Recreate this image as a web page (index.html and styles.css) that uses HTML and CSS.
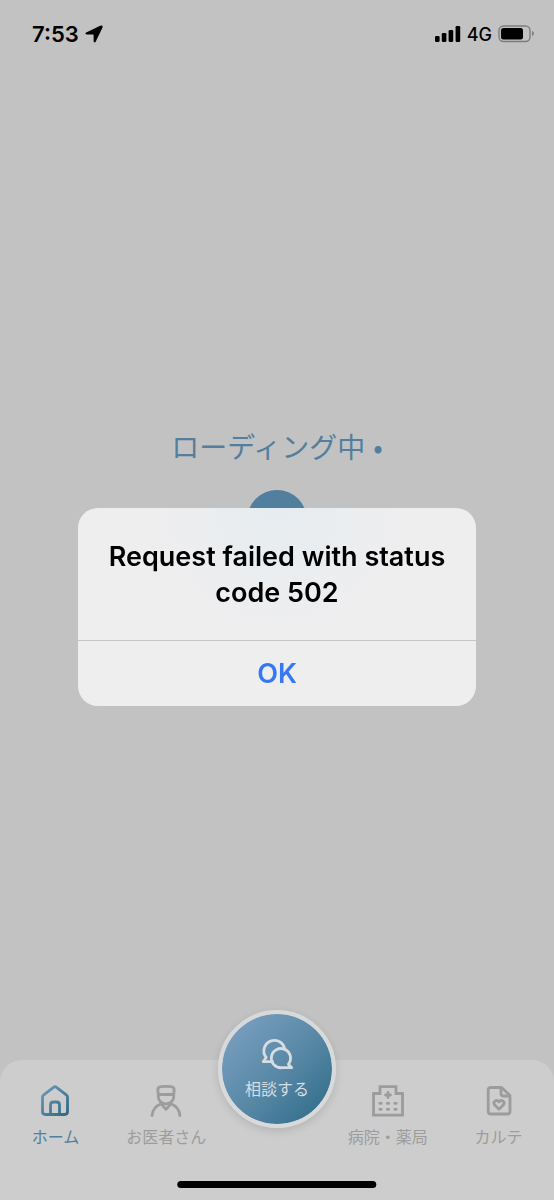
FILE: index.html
```html
<!DOCTYPE html>
<html lang="ja">
<head>
    <meta charset="UTF-8">
    <meta name="viewport" content="width=device-width, initial-scale=1.0">
    <title>ホーム</title>
    <link rel="stylesheet" href="styles.css">
</head>
<body>

<header class="status-bar">
    <div class="status-left">
        <span class="time">7:53</span>
        <svg width="18" height="18" viewBox="0 0 18 18" aria-hidden="true">
            <path d="M1.2 7.6 15.2 .7Q18.4 -.2 17.4 2.8L10.8 16.6Q9.6 18.6 8.6 16.4V10.2Q8.6 9.4 7.8 9.4H1.9Q-.8 9 1.2 7.6Z"/>
        </svg>
    </div>
    <div class="status-right">
        <svg width="26" height="16" viewBox="0 0 26 16" aria-hidden="true">
            <rect x="0" y="10" width="4.6" height="6" rx="1.2"/>
            <rect x="6.8" y="7" width="4.6" height="9" rx="1.2"/>
            <rect x="13.6" y="4" width="4.6" height="12" rx="1.2"/>
            <rect x="20.6" y="0" width="4.6" height="16" rx="1.2"/>
        </svg>
        <span class="network">4G</span>
        <svg width="36" height="18" viewBox="0 0 36 18" aria-hidden="true">
            <rect x="1" y="1" width="31" height="15.5" rx="4.5" fill="none" stroke="#7d7d7d" stroke-width="1.4"/>
            <rect x="3" y="3" width="22" height="11.5" rx="2.5"/>
            <path d="M34 6q2 .8 2 2.6T34 11Z" fill="#7d7d7d"/>
        </svg>
    </div>
</header>

<main class="loading">
    <p class="loading-text">ローディング中<span class="dot">•</span></p>
    <div class="loading-ball"></div>
</main>

<nav class="tab-bar">
    <a class="tab active" href="#home">
        <svg class="tab-icon" viewBox="0 0 36 36" aria-hidden="true">
            <defs>
                <linearGradient id="homeColor" x1="0" y1="0" x2="1" y2="1">
                    <stop offset="0" stop-color="#6c9abb"/>
                    <stop offset="1" stop-color="#2f6884"/>
                </linearGradient>
            </defs>
            <path stroke="url(#homeColor)" d="M5.5 14.2Q5.5 13 6.4 12.2L16.5 4.3Q18 3.2 19.5 4.3L29.6 12.2Q30.5 13 30.5 14.2V28.5Q30.5 31.5 27.5 31.5H8.5Q5.5 31.5 5.5 28.5ZM13.5 31V22Q13.5 19 16.5 19H19.5Q22.5 19 22.5 22V31"/>
        </svg>
        <span>ホーム</span>
    </a>
    <a class="tab" href="#doctors">
        <svg class="tab-icon" viewBox="0 0 36 36" aria-hidden="true">
            <path d="M9.8 7Q10 4 13 3.7Q18 3 23 3.7Q26.2 4 26.2 7L25.7 11.5V14C25.7 18 22 20.8 18 20.8S10.3 18 10.3 14V11.5Z"/>
            <path d="M10.3 11.5H25.7M4 32.5C4.6 26.5 7.5 23 13.2 20.8L18 26.3L22.8 20.8C28.5 23 31.4 26.5 32 32.5"/>
        </svg>
        <span>お医者さん</span>
    </a>
    <a class="consult" href="#consult">
        <svg class="consult-icon" viewBox="0 0 34 34" aria-hidden="true">
            <path d="M24.7 12A10.5 10.5 0 1 0 6.2 20.5L3.2 24.7H12.5"/>
            <path d="M28.4 27.2A9.6 9.6 0 1 0 22 30.7H31.7Z"/>
        </svg>
        <span>相談する</span>
    </a>
    <a class="tab" href="#hospitals">
        <svg class="tab-icon" viewBox="0 0 36 36" aria-hidden="true">
            <path class="square" d="M3.5 32.2V10.5H10V3.7H26V10.5H32.5V32.2Z"/>
            <path d="M18 9.5V14.5M15.5 12H20.5"/>
            <path d="M9.8 20.3H11.2M17.3 20.3H18.7M24.8 20.3H26.2M9.8 26.3H11.2M17.3 26.3H18.7M24.8 26.3H26.2"/>
        </svg>
        <span>病院・薬局</span>
    </a>
    <a class="tab" href="#karte">
        <svg class="tab-icon" viewBox="0 0 36 36" aria-hidden="true">
            <path d="M10 4.5H20.5L29 12.5V28.5Q29 31 26.5 31H10Q7.2 31 7.2 28.5V7Q7.2 4.5 10 4.5Z"/>
            <path d="M20 5V10.5Q20 13 22.5 13H28.5"/>
            <path d="M18 26.3L13.5 21.8C11.5 19 15.5 15.8 18 18.8C20.5 15.8 24.5 19 22.5 21.8Z"/>
        </svg>
        <span>カルテ</span>
    </a>
    <div class="home-indicator"></div>
</nav>

<div class="overlay">
    <div class="alert" role="alertdialog" aria-modal="true" aria-labelledby="alertTitle">
        <h2 id="alertTitle">Request failed with status code 502</h2>
        <button type="button">OK</button>
    </div>
</div>

</body>
</html>
```

FILE: styles.css
```css
* {
    box-sizing: border-box;
}

body {
    display: flex;
    flex-direction: column;
    min-height: 100vh;
    margin: 0;
    background-color: #c2c2c2;
    font-family: "Noto Sans CJK JP", sans-serif;
}

.status-bar {
    display: flex;
    align-items: center;
    justify-content: space-between;
    height: 68px;
    padding: 0 20px 0 32px;
    font-family: Inter, sans-serif;
}

.status-left, .status-right {
    display: flex;
    align-items: center;
    gap: 6px;
}

.time {
    font-size: 22px;
    font-weight: 600;
}

.network {
    font-size: 18px;
    font-weight: 500;
}

.loading {
    flex: 1;
    display: flex;
    flex-direction: column;
    align-items: center;
    justify-content: center;
    gap: 24px;
    padding-bottom: 152px;
}

.loading-text {
    display: flex;
    gap: 8px;
    margin: 0;
    color: #527f9e;
    font-size: 28px;
    line-height: 40px;
}

.loading-ball {
    width: 60px;
    height: 60px;
    border-radius: 50%;
    background-color: #527f9e;
}

.tab-bar {
    position: relative;
    display: grid;
    grid-template-columns: repeat(5, minmax(0, 1fr));
    height: 140px;
    border-radius: 22px 22px 0 0;
    background-color: #cdcdcd;
}

.tab {
    display: flex;
    flex-direction: column;
    align-items: center;
    gap: 5px;
    padding-top: 23px;
    color: #9c9c9c;
    font-size: 16px;
    line-height: 24px;
    text-decoration: none;
    white-space: nowrap;
}

.tab.active {
    color: #527f9e;
}

.tab-icon {
    width: 36px;
    height: 36px;
    fill: none;
    stroke: #9c9c9c;
    stroke-width: 2.8;
    stroke-linecap: round;
    stroke-linejoin: round;
}

.tab-icon .square {
    stroke-linejoin: miter;
}

.consult {
    justify-self: center;
    display: flex;
    flex-direction: column;
    align-items: center;
    gap: 5px;
    width: 118px;
    height: 118px;
    margin-top: -50px;
    padding-top: 23px;
    border: 4px solid #d8d9db;
    border-radius: 50%;
    background: linear-gradient(135deg, #7b9fc0 10%, #5687a5 55%, #2c6a86 95%) border-box;
    background-clip: padding-box;
    box-shadow: 0 3px 8px rgba(0, 0, 0, 0.12);
    color: #d5dce2;
    font-size: 16px;
    line-height: 24px;
    text-decoration: none;
    white-space: nowrap;
}

.consult-icon {
    width: 34px;
    height: 34px;
    fill: none;
    stroke: #d5dce2;
    stroke-width: 2.8;
    stroke-linecap: round;
    stroke-linejoin: round;
}

.home-indicator {
    position: absolute;
    left: 50%;
    bottom: 12px;
    width: 36%;
    height: 7px;
    border-radius: 4px;
    background-color: #000;
    transform: translateX(-50%);
}

.overlay {
    position: fixed;
    inset: 0;
    display: flex;
    align-items: center;
    justify-content: center;
    padding-top: 14px;
}

.alert {
    width: 72%;
    border-radius: 20px;
    overflow: hidden;
    background: radial-gradient(circle at 50% 0, #e6ecf0, #eeeeef 120px);
    font-family: Inter, sans-serif;
    text-align: center;
}

.alert h2 {
    margin: 0;
    padding: 31px 24px 29px;
    font-size: 27px;
    font-weight: 600;
    line-height: 36px;
}

.alert button {
    display: block;
    width: 100%;
    height: 66px;
    border: none;
    border-top: 1px solid #c6c6c8;
    background: none;
    color: #3478f6;
    font-family: inherit;
    font-size: 27px;
    font-weight: 600;
    cursor: pointer;
}
```
